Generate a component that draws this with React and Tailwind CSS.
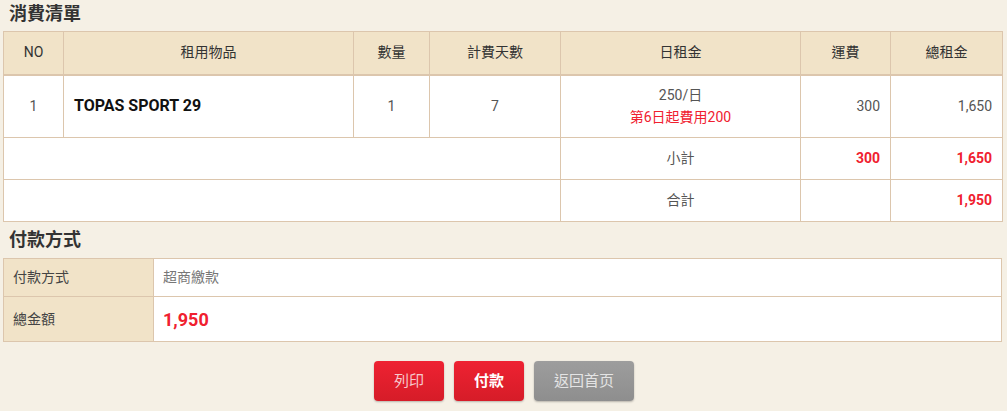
import React from "react";

const font = { fontFamily: "Roboto, 'Noto Sans CJK TC', sans-serif" };

const rows = [
  { no: 1, name: "TOPAS SPORT 29", qty: 1, days: 7, rate: "250/日", note: "第6日起費用200", ship: "300", total: "1,650" },
];

function App() {
  return (
    <div className="min-h-[411px] w-[1007px] bg-[#f5f0e5] px-[3px] text-[#555]" style={font}>
      <h2 className="pl-[6px] pt-[1px] text-[18px] font-bold leading-[26px] text-[#333]">消費清單</h2>

      <table className="mt-[4px] w-[999px] table-fixed border-collapse border border-[#dcc6ad] bg-white text-[14px]">
        <colgroup>
          <col className="w-[60px]" />
          <col className="w-[290px]" />
          <col className="w-[76px]" />
          <col className="w-[131px]" />
          <col className="w-[240px]" />
          <col className="w-[90px]" />
          <col className="w-[112px]" />
        </colgroup>
        <thead>
          <tr className="h-[43px] border-b-2 border-[#dcc6ad] bg-[#f1e3c8] text-[#333]">
            {["NO", "租用物品", "數量", "計費天數", "日租金", "運費", "總租金"].map((h) => (
              <th key={h} className="border border-[#dcc6ad] font-normal">
                {h}
              </th>
            ))}
          </tr>
        </thead>
        <tbody>
          {rows.map((r) => (
            <tr key={r.no} className="h-[63px]">
              <td className="border border-[#dcc6ad] text-center">{r.no}</td>
              <td className="border border-[#dcc6ad] pl-[10px] text-[16px] font-bold text-[#111]">{r.name}</td>
              <td className="border border-[#dcc6ad] text-center">{r.qty}</td>
              <td className="border border-[#dcc6ad] text-center">{r.days}</td>
              <td className="border border-[#dcc6ad] text-center leading-[22px]">
                <div>{r.rate}</div>
                <div className="text-[#f0202f]">{r.note}</div>
              </td>
              <td className="border border-[#dcc6ad] pr-[10px] text-right">{r.ship}</td>
              <td className="border border-[#dcc6ad] pr-[10px] text-right">{r.total}</td>
            </tr>
          ))}
          <tr className="h-[42px]">
            <td colSpan={4} className="border border-[#dcc6ad]"></td>
            <td className="border border-[#dcc6ad] text-center">小計</td>
            <td className="border border-[#dcc6ad] pr-[10px] text-right font-bold text-[#f0202f]">300</td>
            <td className="border border-[#dcc6ad] pr-[10px] text-right font-bold text-[#f0202f]">1,650</td>
          </tr>
          <tr className="h-[42px]">
            <td colSpan={4} className="border border-[#dcc6ad]"></td>
            <td className="border border-[#dcc6ad] text-center">合計</td>
            <td className="border border-[#dcc6ad]"></td>
            <td className="border border-[#dcc6ad] pr-[10px] text-right font-bold text-[#f0202f]">1,950</td>
          </tr>
        </tbody>
      </table>

      <h2 className="mt-[5px] pl-[6px] text-[18px] font-bold leading-[26px] text-[#333]">付款方式</h2>

      <table className="mt-[5px] w-[999px] table-fixed border-collapse border border-[#dcc6ad] bg-white text-[14px]">
        <colgroup>
          <col className="w-[150px]" />
          <col />
        </colgroup>
        <tbody>
          <tr className="h-[38px]">
            <td className="border border-[#dcc6ad] bg-[#f1e3c8] pl-[9px] text-[#444]">付款方式</td>
            <td className="border border-[#dcc6ad] pl-[9px] text-[#777]">超商繳款</td>
          </tr>
          <tr className="h-[45px]">
            <td className="border border-[#dcc6ad] bg-[#f1e3c8] pl-[9px] text-[#444]">總金額</td>
            <td className="border border-[#dcc6ad] pl-[9px] text-[18px] font-bold text-[#f0202f]">1,950</td>
          </tr>
        </tbody>
      </table>

      <div className="mt-[19px] flex justify-center gap-[10px] pl-[1px]">
        <button className="h-[40px] w-[70px] rounded-[4px] bg-gradient-to-b from-[#ee2232] to-[#d61c28] text-[15px] text-[#f6c9cc] shadow-[0_1px_2px_rgba(0,0,0,0.25)]">
          列印
        </button>
        <button className="h-[40px] w-[70px] rounded-[4px] bg-gradient-to-b from-[#ee2232] to-[#d61c28] text-[15px] font-bold text-white shadow-[0_1px_2px_rgba(0,0,0,0.25)]">
          付款
        </button>
        <button className="h-[40px] w-[100px] rounded-[4px] bg-gradient-to-b from-[#9d9d9d] to-[#8e8e8e] text-[15px] text-[#e4e4e4] shadow-[0_1px_2px_rgba(0,0,0,0.25)]">
          返回首页
        </button>
      </div>
    </div>
  );
}

export default App;
